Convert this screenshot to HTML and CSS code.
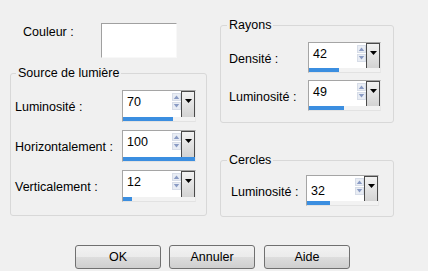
FILE: index.html
```html
<!DOCTYPE html>
<html lang="fr">
<head>
<meta charset="utf-8">
<title>Lumière</title>
<link rel="stylesheet" href="styles.css">
</head>
<body>
<div class="dialog">
  <div class="columns">
    <div class="col-left">
      <div class="color-row">
        <span class="color-label">Couleur :</span>
        <div class="color-box"></div>
      </div>
      <fieldset class="group group-left">
        <legend>Source de lumière</legend>
        <div class="row">
          <span class="lbl">Luminosité :</span>
          <div class="spin"><span class="val">70</span><span class="arrows"><svg viewBox="0 0 9 7" class="up"><path d="M1 6 L4.5 1.5 L8 6 Z"/></svg><svg viewBox="0 0 9 7" class="dn"><path d="M1 1 L4.5 5.5 L8 1 Z"/></svg></span><span class="drop"><svg viewBox="0 0 9 6"><path d="M1 1 H8 L4.5 5 Z"/></svg></span><span class="track"><span class="fill" style="width:70%"></span></span></div>
        </div>
        <div class="row">
          <span class="lbl">Horizontalement :</span>
          <div class="spin"><span class="val">100</span><span class="arrows"><svg viewBox="0 0 9 7" class="up"><path d="M1 6 L4.5 1.5 L8 6 Z"/></svg><svg viewBox="0 0 9 7" class="dn"><path d="M1 1 L4.5 5.5 L8 1 Z"/></svg></span><span class="drop"><svg viewBox="0 0 9 6"><path d="M1 1 H8 L4.5 5 Z"/></svg></span><span class="track"><span class="fill" style="width:100%"></span></span></div>
        </div>
        <div class="row">
          <span class="lbl">Verticalement :</span>
          <div class="spin"><span class="val">12</span><span class="arrows"><svg viewBox="0 0 9 7" class="up"><path d="M1 6 L4.5 1.5 L8 6 Z"/></svg><svg viewBox="0 0 9 7" class="dn"><path d="M1 1 L4.5 5.5 L8 1 Z"/></svg></span><span class="drop"><svg viewBox="0 0 9 6"><path d="M1 1 H8 L4.5 5 Z"/></svg></span><span class="track"><span class="fill" style="width:12%"></span></span></div>
        </div>
      </fieldset>
    </div>
    <div class="col-right">
      <fieldset class="group group-rayons">
        <legend>Rayons</legend>
        <div class="row">
          <span class="lbl">Densité :</span>
          <div class="spin"><span class="val">42</span><span class="arrows"><svg viewBox="0 0 9 7" class="up"><path d="M1 6 L4.5 1.5 L8 6 Z"/></svg><svg viewBox="0 0 9 7" class="dn"><path d="M1 1 L4.5 5.5 L8 1 Z"/></svg></span><span class="drop"><svg viewBox="0 0 9 6"><path d="M1 1 H8 L4.5 5 Z"/></svg></span><span class="track"><span class="fill" style="width:42%"></span></span></div>
        </div>
        <div class="row">
          <span class="lbl">Luminosité :</span>
          <div class="spin"><span class="val">49</span><span class="arrows"><svg viewBox="0 0 9 7" class="up"><path d="M1 6 L4.5 1.5 L8 6 Z"/></svg><svg viewBox="0 0 9 7" class="dn"><path d="M1 1 L4.5 5.5 L8 1 Z"/></svg></span><span class="drop"><svg viewBox="0 0 9 6"><path d="M1 1 H8 L4.5 5 Z"/></svg></span><span class="track"><span class="fill" style="width:49%"></span></span></div>
        </div>
      </fieldset>
      <fieldset class="group group-cercles">
        <legend>Cercles</legend>
        <div class="row">
          <span class="lbl">Luminosité :</span>
          <div class="spin"><span class="val val-low">32</span><span class="arrows"><svg viewBox="0 0 9 7" class="up"><path d="M1 6 L4.5 1.5 L8 6 Z"/></svg><svg viewBox="0 0 9 7" class="dn"><path d="M1 1 L4.5 5.5 L8 1 Z"/></svg></span><span class="drop"><svg viewBox="0 0 9 6"><path d="M1 1 H8 L4.5 5 Z"/></svg></span><span class="track"><span class="fill" style="width:32%"></span></span></div>
        </div>
      </fieldset>
    </div>
  </div>
  <div class="buttons">
    <button class="btn">OK</button>
    <button class="btn">Annuler</button>
    <button class="btn">Aide</button>
  </div>
</div>
</body>
</html>
```

FILE: styles.css
```css
* { box-sizing: border-box; }
html, body { margin: 0; padding: 0; }
body {
  background: #f0f0f0;
  font-family: "Liberation Sans", Arial, sans-serif;
  font-size: 12.5px;
  color: #000;
}
.dialog {
  width: 428px;
  height: 271px;
  display: flex;
  flex-direction: column;
}
.columns {
  display: flex;
  padding-left: 10px;
  gap: 13px;
}
.col-left {
  width: 197px;
  display: flex;
  flex-direction: column;
  padding-top: 23px;
}
.col-right {
  width: 174px;
  display: flex;
  flex-direction: column;
  padding-top: 18px;
}
.color-row {
  display: flex;
  align-items: flex-start;
  height: 34px;
}
.color-label {
  width: 91px;
  padding-left: 13px;
  padding-top: 2px;
  line-height: 15px;
}
.color-box {
  width: 76px;
  height: 35px;
  background: #fff;
  border-top: 1px solid #a0a0a0;
  border-left: 1px solid #a0a0a0;
  border-right: 1px solid #f8f8f8;
  border-bottom: 1px solid #f8f8f8;
}
.group {
  margin: 0;
  border: 1px solid #d8d8d8;
  border-radius: 3px;
  min-width: 0;
  display: flex;
  flex-direction: column;
}
.group legend {
  padding: 0 2px;
  line-height: 15px;
}
.group-left {
  margin-top: 9px;
  height: 150px;
  padding: 9px 0 0 4px;
  gap: 8px;
}
.group-left legend { margin-left: 1px; }
.group-left .lbl { width: 107px; }
.group-rayons {
  height: 105px;
  padding: 9px 0 0 8px;
  gap: 7px;
}
.group-rayons legend { margin-left: -2px; }
.group-rayons .lbl { width: 79px; }
.group-cercles {
  margin-top: 30px;
  height: 64px;
  padding: 7px 0 0 10px;
}
.group-cercles legend { margin-left: -4px; }
.group-cercles .lbl { width: 75px; }
.row {
  display: flex;
  align-items: center;
}
.lbl {
  line-height: 15px;
  padding-top: 3px;
}
.spin {
  width: 74px;
  height: 32px;
  display: grid;
  grid-template-columns: 48px 10px 14px;
  grid-template-rows: 1fr 4px;
  background: #fff;
  border-top: 1px solid #a5a5a5;
  border-left: 1px solid #a5a5a5;
  border-right: 1px solid #e8e8e8;
  border-bottom: 1px solid #e2e2e2;
}
.group-rayons .spin, .group-cercles .spin { width: 73px; height: 31px; grid-template-columns: 47px 10px 14px; }
.val {
  padding: 4px 0 0 4px;
  font-size: 12.5px;
  line-height: 14px;
}
.val-low { padding-top: 8px; }
.arrows {
  display: flex;
  flex-direction: column;
  align-items: center;
  padding-top: 2px;
  gap: 1px;
  background: #fff;
}
.arrows svg {
  width: 9px;
  height: 8px;
  display: block;
  background: #e9edf4;
  border: 1px solid #d7dde8;
}
.arrows svg path { fill: #8a9bc4; }
.drop {
  border: 1px solid #4a4a4a;
  border-bottom: none;
  background: linear-gradient(#f2f2f2, #d3d3d3);
  display: flex;
  justify-content: center;
  padding-top: 6px;
}
.drop svg {
  width: 9px;
  height: 6px;
  display: block;
}
.drop svg path { fill: #000; }
.track {
  grid-column: 1 / -1;
  background: #f2f2f2;
  display: flex;
}
.fill {
  display: block;
  height: 100%;
  background: #3b8ee0;
}
.buttons {
  display: flex;
  gap: 8px;
  padding-left: 75px;
  margin-top: 28px;
}
.btn {
  width: 86px;
  height: 24px;
  margin: 0;
  padding: 0;
  font-family: "Liberation Sans", Arial, sans-serif;
  font-size: 12.5px;
  color: #000;
  border: 1px solid #707070;
  border-radius: 3px;
  background: linear-gradient(#f2f2f2 0%, #ebebeb 50%, #dddddd 51%, #cfcfcf 100%);
}
.btn + .btn + .btn { margin-left: 1px; }
```
